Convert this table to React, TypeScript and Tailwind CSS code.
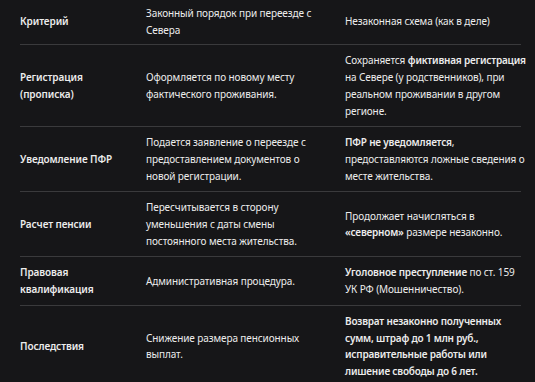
import React from "react";

type Row = { k: string; a: React.ReactNode; b: React.ReactNode };

const B = ({ children }: { children: React.ReactNode }) => (
  <b className="font-semibold tracking-[-0.2px]">{children}</b>
);

const rows: Row[] = [
  {
    k: "Регистрация (прописка)",
    a: "Оформляется по новому месту фактического проживания.",
    b: (
      <>
        Сохраняется <B>фиктивная регистрация</B> на Севере (у родственников), при реальном проживании в другом регионе.
      </>
    ),
  },
  {
    k: "Уведомление ПФР",
    a: "Подается заявление о переезде с предоставлением документов о новой регистрации.",
    b: (
      <>
        <B>ПФР не уведомляется</B>, предоставляются ложные сведения о месте жительства.
      </>
    ),
  },
  {
    k: "Расчет пенсии",
    a: "Пересчитывается в сторону уменьшения с даты смены постоянного места жительства.",
    b: (
      <>
        Продолжает начисляться в <B>«северном»</B> размере незаконно.
      </>
    ),
  },
  {
    k: "Правовая квалификация",
    a: "Административная процедура.",
    b: (
      <>
        <B>Уголовное преступление</B> по ст. 159 УК РФ (Мошенничество).
      </>
    ),
  },
  {
    k: "Последствия",
    a: "Снижение размера пенсионных выплат.",
    b: (
      <B>
        Возврат незаконно полученных сумм, штраф до 1 млн руб., исправительные работы или лишение свободы до 6 лет.
      </B>
    ),
  },
];

export default function App() {
  return (
    <div
      className="w-[535px] h-[382px] overflow-hidden bg-[#161618] text-[#ececec] text-[10px] leading-[16.7px] tracking-[-0.1px] pl-[20px] pr-[14px]"
      style={{ fontFamily: '"Noto Sans", "Open Sans", sans-serif' }}
    >
      <div className="grid grid-cols-[114px_199px_188px] items-center border-b border-[#3a3a3c] pt-[5px] pb-[6px]">
        <div className="pr-3 font-semibold">Критерий</div>
        <div className="px-3">Законный порядок при переезде с Севера</div>
        <div className="pl-3 -mr-2">Незаконная схема (как в деле)</div>
      </div>
      {rows.map((r, i) => (
        <div
          key={i}
          className="grid grid-cols-[114px_199px_188px] items-center border-b border-[#3a3a3c] py-[7px]"
        >
          <div className="pr-3 font-semibold">{r.k}</div>
          <div className="px-3">{r.a}</div>
          <div className="pl-3 -mr-2">{r.b}</div>
        </div>
      ))}
    </div>
  );
}
